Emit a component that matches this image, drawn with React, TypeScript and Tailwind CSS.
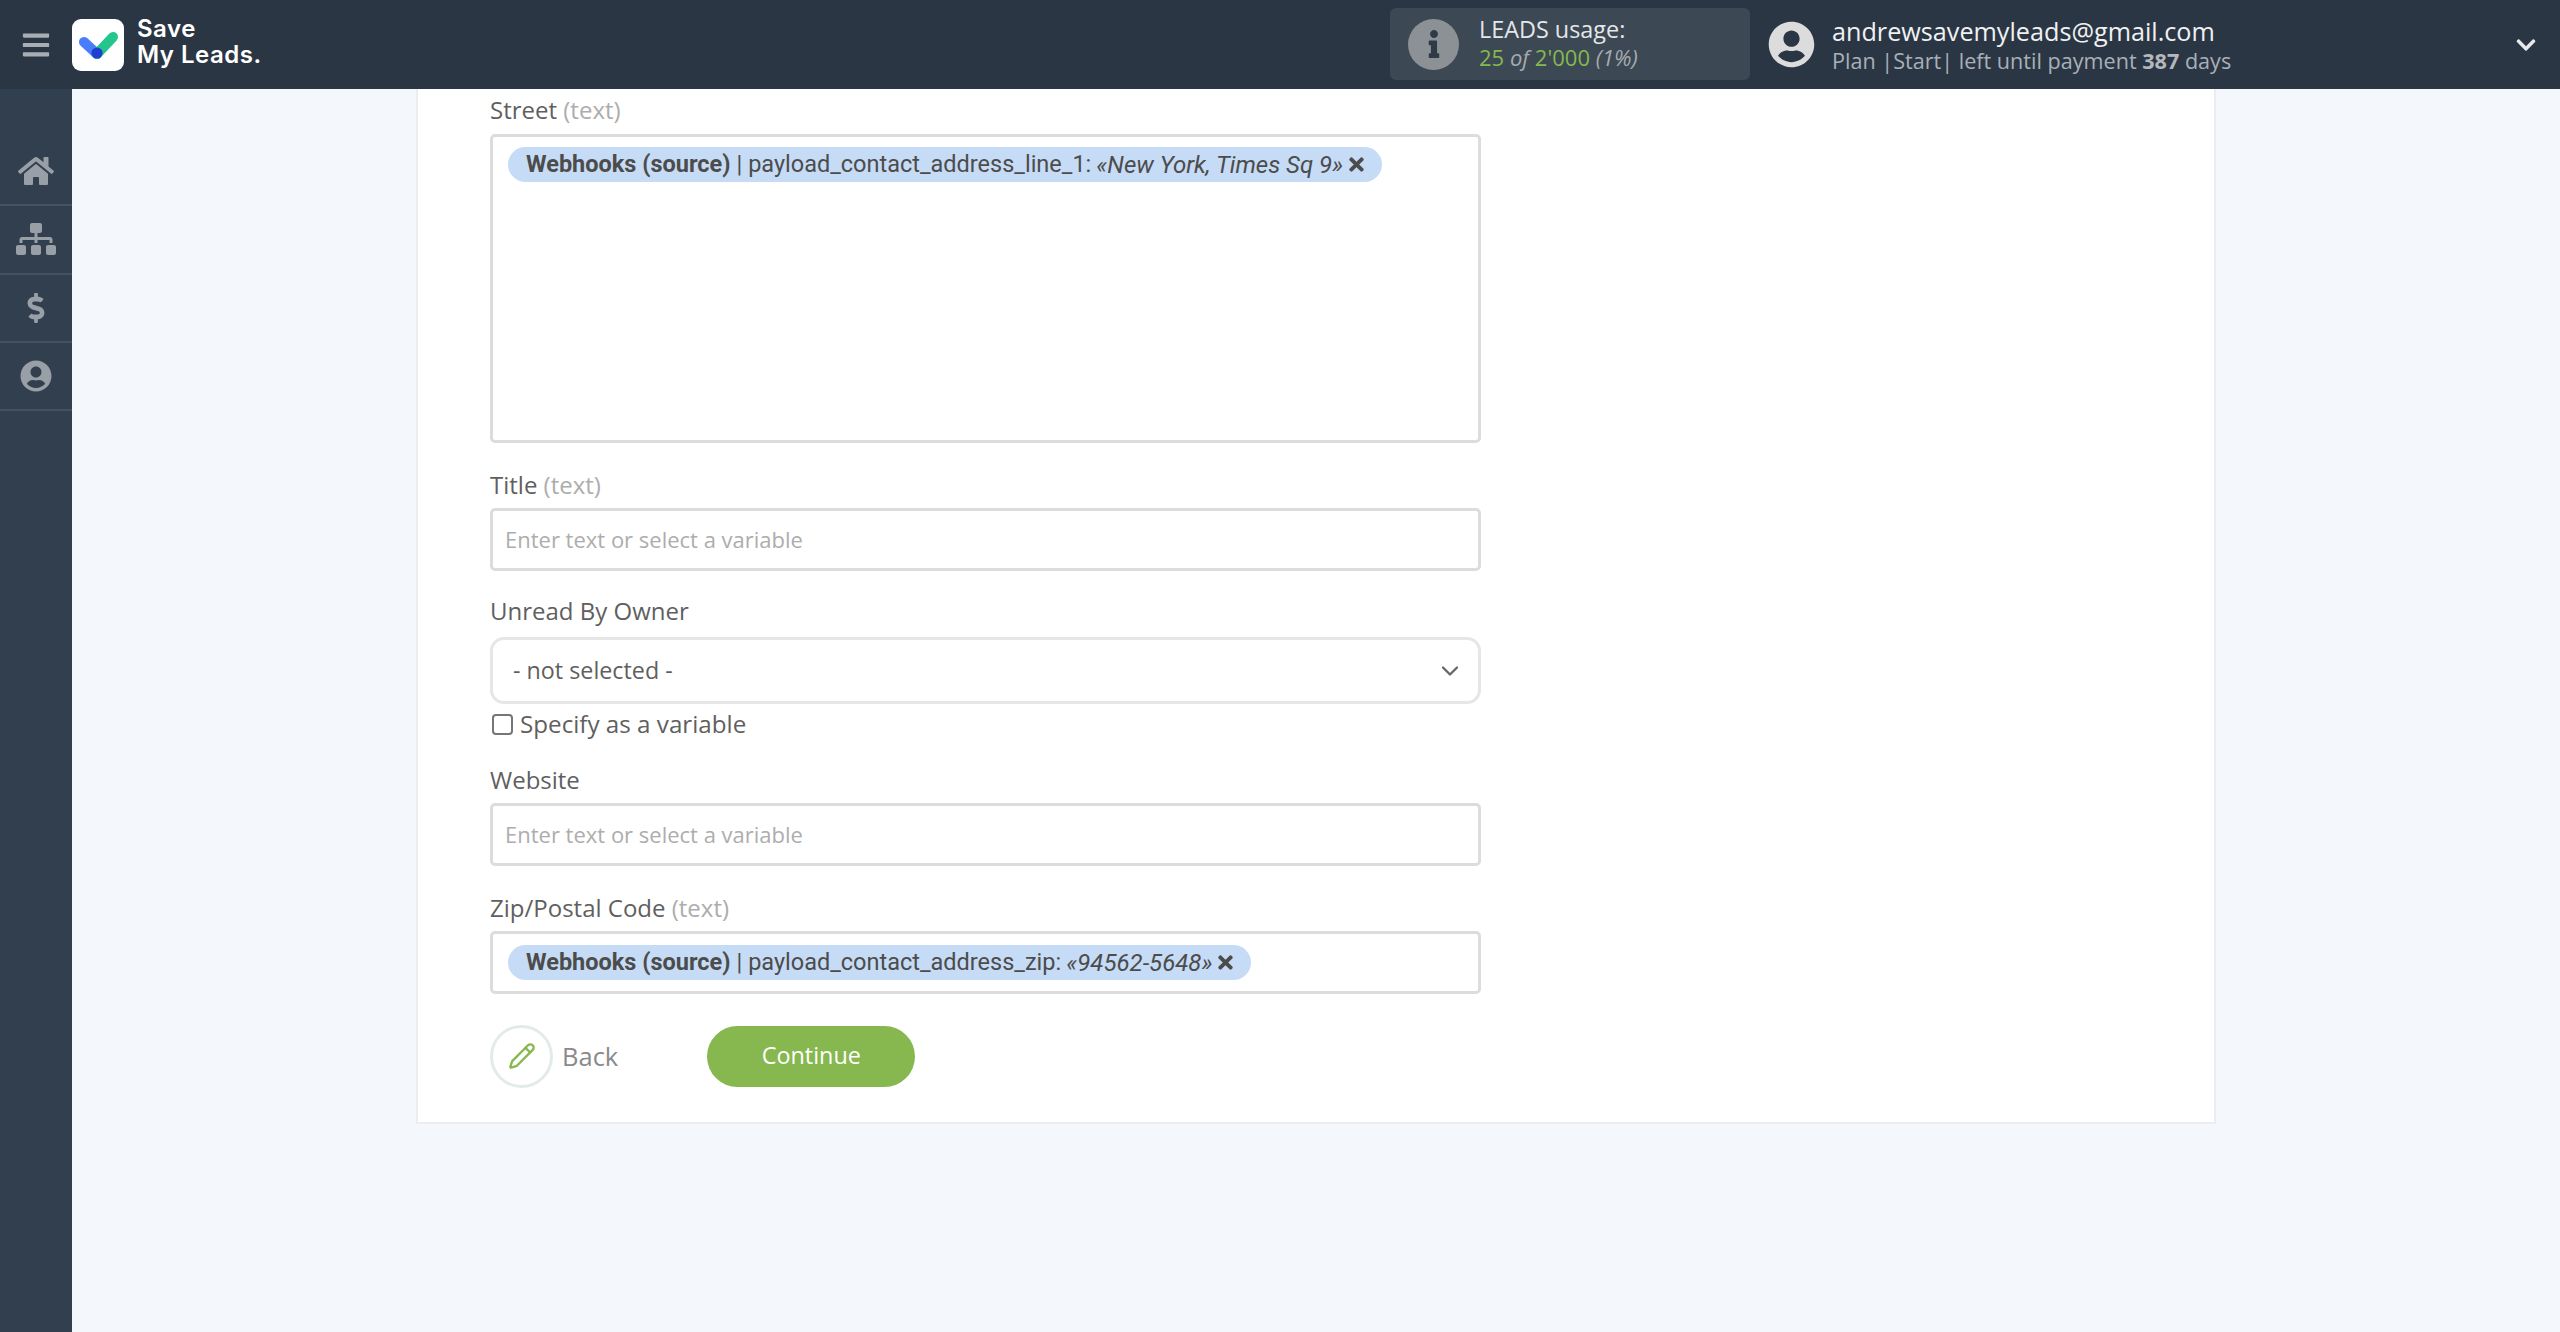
import React from 'react';
import { FaBars, FaHome, FaSitemap, FaDollarSign, FaUserCircle, FaInfo, FaChevronDown, FaTimes } from 'react-icons/fa';
import { LuChevronDown, LuPencil } from 'react-icons/lu';

const Logo = () => (
  <div className="flex h-[52px] w-[52px] shrink-0 items-center justify-center rounded-[9px] bg-white">
    <svg width="40" height="32" viewBox="0 0 40 32">
      <path d="M6 13 L19 25" stroke="#4a7dfb" strokeWidth="10" strokeLinecap="round" />
      <path d="M19 25 L35 8" stroke="#25c58d" strokeWidth="10" strokeLinecap="round" />
      <circle cx="19" cy="24" r="5.6" fill="#1e3fd0" />
    </svg>
  </div>
);

const Header = () => (
  <header className="flex h-[89px] items-center bg-[#2b3644] text-white">
    <div className="flex w-[72px] justify-center text-[#a9aeb4]">
      <FaBars size={30} />
    </div>
    <Logo />
    <div className="ml-[13px] w-[130px] shrink-0 pb-[6px] font-['Inter',sans-serif] text-[24px] font-semibold leading-[26px] tracking-[0.5px]">
      <div>Save</div>
      <div>My Leads.</div>
    </div>
    <div className="mb-[1px] ml-[1123px] flex h-[72px] w-[360px] items-center rounded-[6px] bg-[#3c4853] pl-[18px]">
      <div className="flex h-[51px] w-[51px] items-center justify-center rounded-full bg-[#8b9195] text-[#2f3a46]">
        <FaInfo size={28} />
      </div>
      <div className="ml-[20px] pb-[2px] font-['Open_Sans',sans-serif] text-[22px] leading-[28px]">
        <div className="text-[23.4px] text-[#e4e6e8]">LEADS usage:</div>
        <div className="italic text-[#a5abb0]">
          <span className="not-italic text-[#86b84f]">25</span> of <span className="not-italic text-[#86b84f]">2'000</span> (1%)
        </div>
      </div>
    </div>
    <div className="ml-[18px] text-[#dcdcdc]">
      <FaUserCircle size={47} />
    </div>
    <div className="ml-[17px] font-['Open_Sans',sans-serif]">
      <div className="text-[25.2px] leading-[31px] text-[#f0f1f2]">andrewsavemyleads@gmail.com</div>
      <div className="text-[21.6px] leading-[27px] text-[#a8b0b8]">
        Plan |Start| left until payment <b className="font-bold text-[#b4b8bc]">387</b> days
      </div>
    </div>
    <div className="ml-auto mr-[23px] text-[#e6e8ea]">
      <FaChevronDown size={22} />
    </div>
  </header>
);

const navItems = [FaHome, FaSitemap, FaDollarSign, FaUserCircle];

const Sidebar = () => (
  <aside className="w-[72px] shrink-0 bg-[#323f4f] pt-[49px]">
    {navItems.map((Icon, index) => (
      <div key={index} className="flex h-[68.3px] items-center justify-center border-b-2 border-[#445160] text-[#989fa6]">
        <Icon size={index === 1 ? 40 : index === 2 ? 30 : index === 3 ? 32 : 36} />
      </div>
    ))}
  </aside>
);

const Label = ({ name, hint }: { name: string; hint?: boolean }) => (
  <div className="h-[24px] text-[24px] leading-[22px] text-[#5f5f5f]">
    {name} {hint && <span className="text-[#adadad]">(text)</span>}
  </div>
);

const Tag = ({ field, value }: { field: string; value: string }) => (
  <span className="inline-flex h-[35px] items-center whitespace-nowrap rounded-full bg-[#c6dbf5] pl-[18px] pr-[15px] font-['Roboto',sans-serif] text-[23.5px] text-[#4c4c4c]">
    <b className="font-bold">Webhooks (source)</b>
    <span className="ml-[6px]">| {field}:</span>
    <i className="ml-[5px] text-[24px]">{value}</i>
    <FaTimes size={21} className="ml-[3px]" />
  </span>
);

const TextInput = () => (
  <div className="mt-[10px] flex h-[63px] items-center rounded-[5px] border-[3px] border-[#dcdcdc] pl-[12px] text-[22px] text-[#adadad]">
    Enter text or select a variable
  </div>
);

const Form = () => (
  <div className="ml-[72px] w-[991px] font-['Open_Sans',sans-serif]">
    <div className="pt-[10px]">
      <Label name="Street" hint />
      <div className="mt-[11px] h-[309px] rounded-[5px] border-[3px] border-[#dcdcdc] pl-[15px] pt-[10px]">
        <Tag field="payload_contact_address_line_1" value="«New York, Times Sq 9»" />
      </div>
    </div>
    <div className="mt-[31px]">
      <Label name="Title" hint />
      <TextInput />
    </div>
    <div className="mt-[29px]">
      <Label name="Unread By Owner" />
      <div className="mt-[13px] flex h-[67px] items-center justify-between rounded-[14px] border-[3px] border-[#e6e6e6] pl-[20px] pr-[14px] text-[23.3px] text-[#5f5f5f]">
        - not selected -
        <LuChevronDown size={28} className="text-[#666666]" />
      </div>
      <div className="mt-[6px] flex h-[29px] items-center text-[24.2px] text-[#5f5f5f]">
        <span className="ml-[2px] h-[21px] w-[21px] rounded-[4px] border-2 border-[#767676] bg-white" />
        <span className="ml-[7px]">Specify as a variable</span>
      </div>
    </div>
    <div className="mt-[30px]">
      <Label name="Website" />
      <TextInput />
    </div>
    <div className="mt-[31px]">
      <Label name="Zip/Postal Code" hint />
      <div className="mt-[10px] flex h-[63px] items-center rounded-[5px] border-[3px] border-[#dcdcdc] pl-[15px]">
        <Tag field="payload_contact_address_zip" value="«94562-5648»" />
      </div>
    </div>
    <div className="mt-[31px] flex h-[62px] items-center">
      <div className="flex h-[63px] w-[63px] items-center justify-center rounded-full border-[3px] border-[#e3ebe8] text-[#86b84f]">
        <LuPencil size={28} />
      </div>
      <span className="ml-[9px] text-[25.5px] text-[#8a8a8a]">Back</span>
      <div className="ml-[89px] flex h-[61px] w-[208px] items-center justify-center rounded-full bg-[#86b84f] text-[23.4px] text-white">
        Continue
      </div>
    </div>
  </div>
);

export default function App() {
  return (
    <div className="flex h-[1332px] flex-col overflow-hidden bg-[#f4f7fc]">
      <Header />
      <div className="flex flex-1">
        <Sidebar />
        <main className="flex-1">
          <div className="mx-auto h-[1035px] w-[1800px] border-x-2 border-b-2 border-[#ecedf0] bg-white">
            <Form />
          </div>
        </main>
      </div>
    </div>
  );
}
